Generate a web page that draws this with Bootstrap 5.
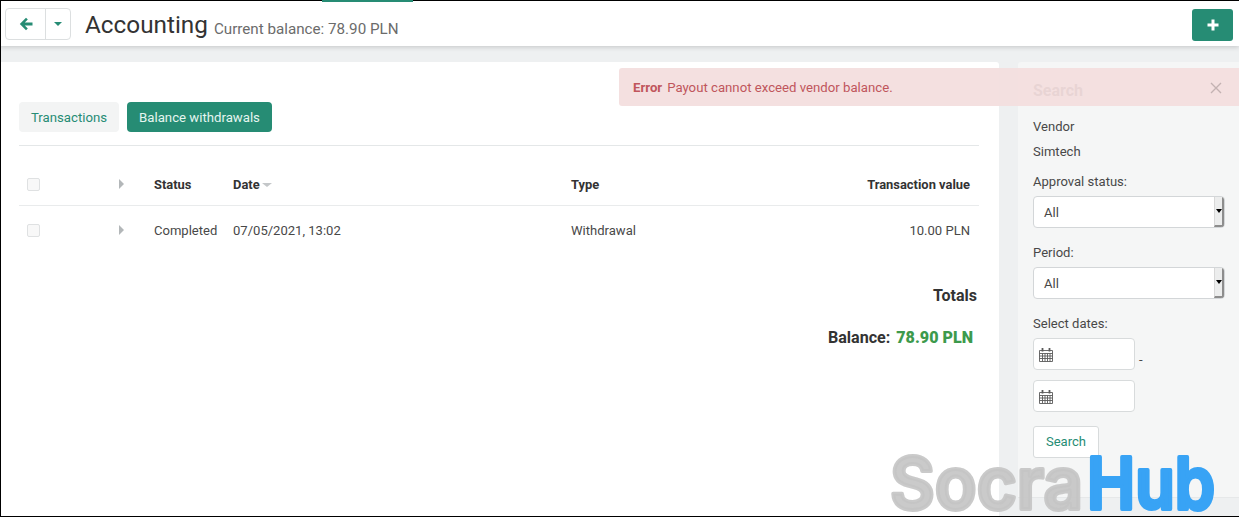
<!DOCTYPE html>
<html lang="en">
<head>
<meta charset="utf-8">
<title>Accounting</title>
<link href="https://cdn.jsdelivr.net/npm/bootstrap@5.3.0/dist/css/bootstrap.min.css" rel="stylesheet">
<style>
html,body{height:517px;overflow:hidden}
body{font-family:Roboto,"Liberation Sans",sans-serif;font-size:13.05px;color:#484848;background:#eef0f1;position:relative}
.frame-line{position:absolute;inset:0;border:1px solid #000;border-right:0;pointer-events:none;z-index:9}
.topbar{height:46px;background:#fff;box-shadow:0 1px 5px rgba(0,0,0,.18);padding:8px 0 0 5px;position:relative;z-index:2}
.top-accent{position:absolute;top:0;left:322px;width:91px;height:2px;background:#268c74;z-index:10}
.back-group{width:66px;height:32px;border:1px solid #dcdfe0;border-radius:4px;background:#fff;color:#268c74}
.back-main{width:40px;border-right:1px solid #dcdfe0}
.caret-down{width:0;height:0;border-left:4px solid transparent;border-right:4px solid transparent;border-top:4px solid #268c74}
.page-name{font-size:24.3px;line-height:34px;color:#333;margin:0 0 0 14px;font-weight:400}
.page-sub{font-size:15.2px;color:#6b6b6b;margin-left:6px;position:relative;top:1px}
.add-btn{width:41px;height:32px;margin-right:6px;margin-top:1px;background:#268c74;border-radius:3px;color:#fff}
.workarea{height:471px;padding-top:16px}
.main-pane{width:999px;background:#fff;padding:40px 20px 0 19px;height:455px;border-radius:0 3px 0 0}
.side-pane{width:221px;margin-left:19px;background:#f5f6f6;padding:19px 14px 0 15px;height:436px;border-radius:3px 0 0 0;border-bottom:1px solid #e6e8e9}
.tab-pill{height:30px;line-height:31px;border-radius:4px;font-size:13.2px}
.tab-off{background:#f3f4f4;color:#268c74;width:100px;text-align:center}
.tab-on{background:#268c74;color:#e5f5f0;margin-left:8px;width:145px;text-align:center}
.rule{border-top:1px solid #e4e7e8;margin-top:13px}
.grid-head,.grid-row{display:grid;grid-template-columns:100px 35px 79px 338px 1fr;padding-right:9px;align-items:center}
.grid-head{height:60px;border-bottom:1px solid #e9ebec;font-weight:700;font-size:12.9px;color:#333;padding-top:18px}
.grid-row{height:49px}
.fake-check{width:13px;height:13px;margin-left:8px;border:1px solid #dfe1e2;background:#f8f8f8;border-radius:2px;display:block}
.tri-right{width:0;height:0;border-top:5px solid transparent;border-bottom:5px solid transparent;border-left:5px solid #b3b7b9;display:block;margin-top:-2px}
.sort-mark{display:inline-block;width:0;height:0;border-left:5px solid transparent;border-right:5px solid transparent;border-top:4px solid #c4c7c9;margin-left:2px;vertical-align:2px}
.totals-title{font-size:16px;font-weight:700;color:#333;text-align:right;line-height:20px;margin-top:31px;padding-right:2px}
.totals-sum{font-size:16.1px;font-weight:700;text-align:right;line-height:20px;margin-top:22px;padding-right:6px;color:#333}
.totals-sum b{color:#3d9a4c;margin-left:2px}
.side-title{font-size:16px;font-weight:700;color:#333;line-height:20px;margin-bottom:13px}
.side-text{line-height:25px}
.field-label{margin:8px 0 4px;line-height:20px}
.select-box{width:192px;height:32px;margin-bottom:15px;background:#fff;border:1px solid #d3d6d8;border-radius:4px;padding-left:10px;line-height:31px;position:relative;overflow:hidden}
.select-spin{position:absolute;right:0;top:0;bottom:0;width:10px;background:#eceded;border-left:1px solid #d8d8d8;border-right:2px solid #8d8d8d;border-bottom:2px solid #8d8d8d;display:flex;align-items:center;justify-content:center}
.select-spin i{width:0;height:0;border-left:3px solid transparent;border-right:3px solid transparent;border-top:4px solid #000;display:block}
.date-box{width:102px;height:32px;background:#fff;border:1px solid #d8dbdc;border-radius:4px;padding-left:5px}
.date-row{margin-bottom:10px}
.find-btn{width:66px;height:32px;margin-top:14px;background:#fff;border:1px solid #d8dbdc;border-radius:3px;color:#268c74;line-height:30px;text-align:center}
.error-flash{position:absolute;left:619px;top:68px;width:620px;height:38px;background:rgba(243,222,222,.94);border-radius:3px 0 0 3px;padding:1px 17px 0 14px;color:#c0565c;z-index:3;font-size:13.2px}
.error-gap{margin-right:5px}
.brand-stamp{position:absolute;left:0;top:0;z-index:5;pointer-events:none;font-family:Inter,Lato,sans-serif;font-weight:600;font-size:72px}
.stamp-grey{fill:#c4c4c4;stroke:#c4c4c4;fill-opacity:.9;stroke-opacity:.9}
.stamp-blue{fill:#38a3f5;stroke:#38a3f5}
.stamp-grey,.stamp-blue{stroke-width:4;stroke-linejoin:round}
</style>
</head>
<body>
<div class="top-accent"></div>
<div class="topbar d-flex align-items-start">
  <div class="back-group d-flex">
    <div class="back-main d-flex align-items-center justify-content-center">
      <svg width="14" height="14" viewBox="0 0 14 14" aria-hidden="true"><path d="M7 .8 .8 7 7 13.200 8.800 11.400 5.800 8.400H13.500V5.600H5.800L8.800 2.600Z" fill="#268c74"/></svg>
    </div>
    <div class="flex-grow-1 d-flex align-items-center justify-content-center"><span class="caret-down"></span></div>
  </div>
  <h1 class="page-name">Accounting<span class="page-sub">Current balance: 78.90 PLN</span></h1>
  <div class="add-btn ms-auto d-flex align-items-center justify-content-center">
    <svg width="12" height="12" viewBox="0 0 12 12" aria-hidden="true"><path d="M6 .5v11M.5 6h11" stroke="#fff" stroke-width="3"/></svg>
  </div>
</div>
<div class="workarea d-flex">
  <div class="main-pane">
    <div class="d-flex">
      <div class="tab-pill tab-off">Transactions</div>
      <div class="tab-pill tab-on">Balance withdrawals</div>
    </div>
    <div class="rule"></div>
    <div class="grid-head">
      <div><span class="fake-check"></span></div>
      <div><span class="tri-right"></span></div>
      <div>Status</div>
      <div>Date<span class="sort-mark"></span></div>
      <div class="d-flex justify-content-between"><span>Type</span><span>Transaction value</span></div>
    </div>
    <div class="grid-row">
      <div><span class="fake-check"></span></div>
      <div><span class="tri-right"></span></div>
      <div>Completed</div>
      <div>07/05/2021, 13:02</div>
      <div class="d-flex justify-content-between"><span>Withdrawal</span><span>10.00 PLN</span></div>
    </div>
    <div class="totals-title">Totals</div>
    <div class="totals-sum">Balance: <b>78.90 PLN</b></div>
  </div>
  <aside class="side-pane">
    <div class="side-title">Search</div>
    <div class="side-text">Vendor</div>
    <div class="side-text">Simtech</div>
    <div class="field-label">Approval status:</div>
    <div class="select-box">All<span class="select-spin"><i></i></span></div>
    <div class="field-label">Period:</div>
    <div class="select-box">All<span class="select-spin"><i></i></span></div>
    <div class="field-label">Select dates:</div>
    <div class="d-flex align-items-end date-row">
      <div class="date-box d-flex align-items-center">
        <svg width="14" height="15" viewBox="0 0 14 15" aria-hidden="true"><path d="M.5 3.500h13v11H.5zM.5 6.500h13M.5 9h13M.5 11.500h13M3.500 6.500v8M6 6.500v8M8.500 6.500v8M11 6.500v8" fill="none" stroke="#5a5a5a" stroke-width=".9"/><path d="M3.500 1v3.500M10.500 1v3.500" stroke="#5a5a5a" stroke-width="1.800"/></svg>
      </div>
      <span class="ms-1">-</span>
    </div>
    <div class="date-box d-flex align-items-center">
      <svg width="14" height="15" viewBox="0 0 14 15" aria-hidden="true"><path d="M.5 3.500h13v11H.5zM.5 6.500h13M.5 9h13M.5 11.500h13M3.500 6.500v8M6 6.500v8M8.500 6.500v8M11 6.500v8" fill="none" stroke="#5a5a5a" stroke-width=".9"/><path d="M3.500 1v3.500M10.500 1v3.500" stroke="#5a5a5a" stroke-width="1.800"/></svg>
    </div>
    <div class="find-btn">Search</div>
  </aside>
</div>
<div class="error-flash d-flex align-items-center">
  <strong class="error-gap">Error</strong><span>Payout cannot exceed vendor balance.</span>
  <svg class="ms-auto" width="12" height="12" viewBox="0 0 12 12" aria-hidden="true"><path d="M1 1l10 10M11 1 1 11" stroke="#c3b2b2" stroke-width="1.400"/></svg>
</div>
<svg class="brand-stamp" width="1239" height="517" viewBox="0 0 1239 517">
  <text class="stamp-grey" x="890" y="509" textLength="193" lengthAdjust="spacingAndGlyphs">Socra</text>
  <text class="stamp-blue" x="1087" y="509" textLength="128" lengthAdjust="spacingAndGlyphs">Hub</text>
</svg>
<div class="frame-line"></div>
<script src="https://cdn.jsdelivr.net/npm/bootstrap@5.3.0/dist/js/bootstrap.bundle.min.js"></script>
</body>
</html>
